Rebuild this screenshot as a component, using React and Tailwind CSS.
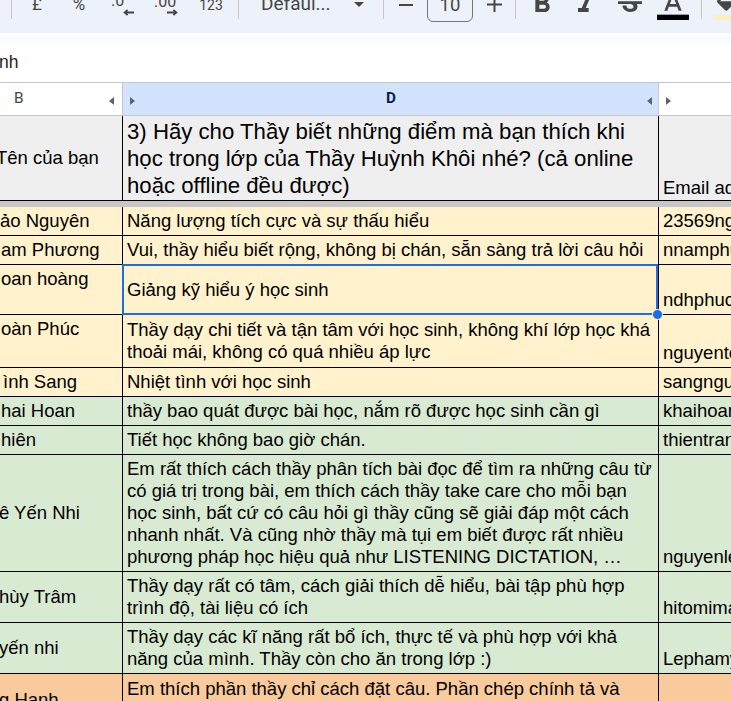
import React from "react";
import { MdFormatBold, MdFormatItalic, MdStrikethroughS } from "react-icons/md";

const YELLOW = "bg-[#fff2cc]";
const GREEN = "bg-[#d9ead3]";
const ORANGE = "bg-[#f9cb9c]";

const rows = [
  { h: "h-[29px]", bg: YELLOW, name: "ảo Nguyên", ml: "ml-0", lines: ["Năng lượng tích cực và sự thấu hiểu"], email: "23569nguyenthao@gmail.com" },
  { h: "h-[29px]", bg: YELLOW, name: "am Phương", ml: "ml-[1px]", lines: ["Vui, thầy hiểu biết rộng, không bị chán, sẵn sàng trả lời câu hỏi"], email: "nnamphuong@gmail.com" },
  { h: "h-[50px]", bg: YELLOW, name: "oan hoàng", ml: "ml-[1px]", top: true, selected: true, lines: ["Giảng kỹ hiểu ý học sinh"], email: "ndhphuc@gmail.com" },
  { h: "h-[53px]", bg: YELLOW, name: "oàn Phúc", ml: "ml-[1px]", top: true, lines: ["Thầy dạy chi tiết và tận tâm với học sinh, không khí lớp học khá", "thoải mái, không có quá nhiều áp lực"], email: "nguyentoanphuc@gmail.com" },
  { h: "h-[29px]", bg: YELLOW, name: "ình Sang", ml: "ml-[3px]", lines: ["Nhiệt tình với học sinh"], email: "sangnguyen@gmail.com" },
  { h: "h-[29px]", bg: GREEN, name: "hai Hoan", ml: "ml-[1px]", lines: ["thầy bao quát được bài học, nắm rõ được học sinh cần gì"], email: "khaihoan@gmail.com" },
  { h: "h-[29px]", bg: GREEN, name: "hiên", ml: "ml-[1px]", lines: ["Tiết học không bao giờ chán."], email: "thientran@gmail.com" },
  {
    h: "h-[117px]",
    bg: GREEN,
    name: "ê Yến Nhi",
    ml: "-ml-[1px]",
    lines: [
      "Em rất thích cách thầy phân tích bài đọc để tìm ra những câu từ",
      "có giá trị trong bài, em thích cách thầy take care cho mỗi bạn",
      "học sinh, bất cứ có câu hỏi gì thầy cũng sẽ giải đáp một cách",
      "nhanh nhất. Và cũng nhờ thầy mà tụi em biết được rất nhiều",
      "phương pháp học hiệu quả như LISTENING DICTATION, …",
    ],
    email: "nguyenleyennhi@gmail.com",
  },
  { h: "h-[51px]", bg: GREEN, name: "hùy Trâm", ml: "-ml-[1px]", lines: ["Thầy dạy rất có tâm, cách giải thích dễ hiểu, bài tập phù hợp", "trình độ, tài liệu có ích"], email: "hitomimaru@gmail.com" },
  { h: "h-[51px]", bg: GREEN, name: "yến nhi", ml: "-ml-[1px]", lines: ["Thầy dạy các kĩ năng rất bổ ích, thực tế và phù hợp với khả", "năng của mình. Thầy còn cho ăn trong lớp :)"], email: "Lephamyennhi@gmail.com" },
  { h: "h-[53px]", bg: ORANGE, name: "g Hạnh", ml: "-ml-[1px]", lines: ["Em thích phần thầy chỉ cách đặt câu. Phần chép chính tả và", "luyện nghe cũng rất hay"], email: "" },
];

function Sep() {
  return <div className="w-px h-[30px] shrink-0 bg-[#c7c7c7]" />;
}

function Toolbar() {
  return (
    <div className="h-[33px] bg-[#edf2fa] overflow-hidden">
      <div className="flex items-center h-[32px] -mt-[12px] text-[#444746] font-['Roboto',sans-serif]">
        <div className="w-[11px] shrink-0" />
        <Sep />
        <div className="w-[50px] shrink-0 flex justify-center text-[17px] mt-[2px]">£</div>
        <div className="w-[34px] shrink-0 flex justify-center text-[17px] mt-[2px]">%</div>
        <div className="w-[54px] shrink-0 flex justify-center">
          <div className="w-[24px] h-[32px] flex flex-col">
            <span className="text-[16px] leading-[15px] mt-[5px]">.0</span>
            <svg className="ml-[12px] mt-[1px]" width="11" height="7" viewBox="0 0 11 7">
              <path d="M11 3.5H2M4.6 0.8L1.6 3.5l3 2.7" stroke="#444746" strokeWidth="1.8" fill="none" />
            </svg>
          </div>
        </div>
        <div className="w-[34px] shrink-0 flex justify-center">
          <div className="w-[26px] h-[32px] flex flex-col">
            <span className="text-[16px] leading-[15px] mt-[6px]">.00</span>
            <svg className="ml-[13px]" width="11" height="7" viewBox="0 0 11 7">
              <path d="M0 3.5h9M6.4 0.8l3 2.7-3 2.7" stroke="#444746" strokeWidth="1.8" fill="none" />
            </svg>
          </div>
        </div>
        <div className="w-[54px] shrink-0 flex justify-center text-[14px] mt-[3px]">123</div>
        <Sep />
        <div className="w-[22px] shrink-0" />
        <div className="w-[86px] shrink-0 text-[19px] whitespace-nowrap">Defaul...</div>
        <div className="w-[24px] shrink-0 flex justify-center">
          <svg width="10" height="5" viewBox="0 0 10 5">
            <path d="M0 0h10L5 5z" fill="#444746" />
          </svg>
        </div>
        <div className="w-[12px] shrink-0" />
        <Sep />
        <div className="w-[43px] shrink-0 flex justify-center mt-[2px]">
          <svg width="14" height="2" viewBox="0 0 14 2">
            <rect width="14" height="2" fill="#444746" />
          </svg>
        </div>
        <div className="w-[46px] h-[36px] shrink-0 border border-[#747775] rounded-[6px] flex items-center justify-center pt-[4px] text-[18.5px]">
          10
        </div>
        <div className="w-[42px] shrink-0 flex justify-center">
          <svg width="15" height="15" viewBox="0 0 15 15">
            <path d="M7.5 0v15M0 7.5h15" stroke="#444746" strokeWidth="2" />
          </svg>
        </div>
        <Sep />
        <div className="w-[51px] shrink-0 flex justify-center">
          <MdFormatBold size={32} />
        </div>
        <div className="w-[37px] shrink-0 flex justify-center">
          <MdFormatItalic size={32} />
        </div>
        <div className="w-[51px] shrink-0 flex justify-center">
          <MdStrikethroughS size={32} />
        </div>
        <div className="w-[2px] shrink-0" />
        <svg className="shrink-0" width="32" height="32" viewBox="0 0 24 24">
          <path d="M11 3L5.5 17h2.25l1.12-3h6.25l1.12 3h2.25L13 3h-2zm-1.38 9L12 5.67 14.38 12H9.62z" fill="#444746" />
          <rect x="0" y="20" width="24" height="4" fill="#000" />
        </svg>
        <div className="w-[12px] shrink-0" />
        <Sep />
        <div className="w-[11px] shrink-0" />
        <svg className="shrink-0" width="32" height="32" viewBox="0 0 24 24">
          <path
            d="M16.56 8.94L7.62 0 6.21 1.41l2.38 2.38-5.15 5.15c-.59.59-.59 1.54 0 2.12l5.5 5.5c.29.29.68.44 1.06.44s.77-.15 1.06-.44l5.5-5.5c.59-.58.59-1.53 0-2.12zM5.21 10L10 5.21 14.79 10H5.21zM19 11.5s-2 2.17-2 3.5c0 1.1.9 2 2 2s2-.9 2-2c0-1.33-2-3.5-2-3.5z"
            fill="#444746"
          />
          <rect x="0" y="20" width="24" height="4" fill="#fdeec4" />
        </svg>
      </div>
    </div>
  );
}

function LeftTri() {
  return (
    <svg className="shrink-0 mt-[3px]" width="5" height="8" viewBox="0 0 5 8">
      <path d="M5 0v8L0 4z" fill="#5f6368" />
    </svg>
  );
}

function RightTri() {
  return (
    <svg className="shrink-0 mt-[3px]" width="5" height="8" viewBox="0 0 5 8">
      <path d="M0 0v8l5-4z" fill="#5f6368" />
    </svg>
  );
}

function ColumnHeaders() {
  return (
    <div className="flex h-[33px] border-b border-[#c4c7c5] font-['Roboto',sans-serif] text-[15.3px] leading-none">
      <div className="w-[123px] shrink-0 border-r border-[#c4c7c5] bg-white flex items-center pl-[14px] pr-[8px]">
        <span className="flex-1 text-[#444746]">B</span>
        <LeftTri />
      </div>
      <div className="w-[536px] shrink-0 border-r border-[#c4c7c5] bg-[#d3e3fd] flex items-center pl-[7px] pr-[6px]">
        <RightTri />
        <span className="flex-1 text-center font-bold text-[#041e49]">D</span>
        <LeftTri />
      </div>
      <div className="flex-1 bg-white flex items-center pl-[7px]">
        <RightTri />
      </div>
    </div>
  );
}

function Row({ r }) {
  return (
    <div className={`flex border-b border-black ${r.h} ${r.bg}`}>
      <div
        className={`w-[123px] shrink-0 border-r border-black flex overflow-hidden whitespace-nowrap ${
          r.top ? "items-start pt-[3px]" : "items-center"
        }`}
      >
        <span className={r.ml}>{r.name}</span>
      </div>
      <div className="relative w-[536px] shrink-0 border-r border-black flex flex-col justify-center px-[4px]">
        {r.lines.map((l) => (
          <div key={l} className="whitespace-nowrap">
            {l}
          </div>
        ))}
        {r.selected && (
          <div className="absolute -left-px -top-px right-0 -bottom-px border-2 border-[#1a6ee6] z-10">
            <div className="absolute -right-[7px] -bottom-[7px] w-[11px] h-[11px] rounded-full bg-[#1a6ee6] border border-white" />
          </div>
        )}
      </div>
      <div className="flex-1 min-w-0 overflow-hidden whitespace-nowrap flex items-end pl-[4px] pb-[3px]">{r.email}</div>
    </div>
  );
}

export default function App() {
  return (
    <div className="w-[731px] h-[701px] overflow-hidden bg-white">
      <Toolbar />
      <div className="h-[10px] bg-[#f9fbfd]" />
      {/* formula bar */}
      <div className="h-[40px] border-b border-[#c4c7c5] flex items-center font-['Liberation_Sans',Arial,sans-serif] text-[17.5px] text-[#1f1f1f]">
        <span className="-ml-px">nh</span>
      </div>
      <ColumnHeaders />

      <div className="font-['Liberation_Sans',Arial,sans-serif] text-[18.5px] leading-[22px] text-black">
        {/* header row */}
        <div className="flex h-[85px] border-b border-black bg-[#efefef]">
          <div className="w-[123px] shrink-0 border-r border-black flex items-center overflow-hidden whitespace-nowrap">
            <span className="-ml-[4px]">Tên của bạn</span>
          </div>
          <div className="w-[536px] shrink-0 border-r border-black flex flex-col justify-center px-[4px] text-[22.2px] leading-[27px]">
            <div className="whitespace-nowrap">3) Hãy cho Thầy biết những điểm mà bạn thích khi</div>
            <div className="whitespace-nowrap">học trong lớp của Thầy Huỳnh Khôi nhé? (cả online</div>
            <div className="whitespace-nowrap">hoặc offline đều được)</div>
          </div>
          <div className="flex-1 min-w-0 overflow-hidden whitespace-nowrap flex items-end pl-[4px] pb-px">Email address</div>
        </div>
        <div className="h-[6px] bg-[#c7c7c7]" />
        {rows.map((r, i) => (
          <Row key={i} r={r} />
        ))}
      </div>
    </div>
  );
}
